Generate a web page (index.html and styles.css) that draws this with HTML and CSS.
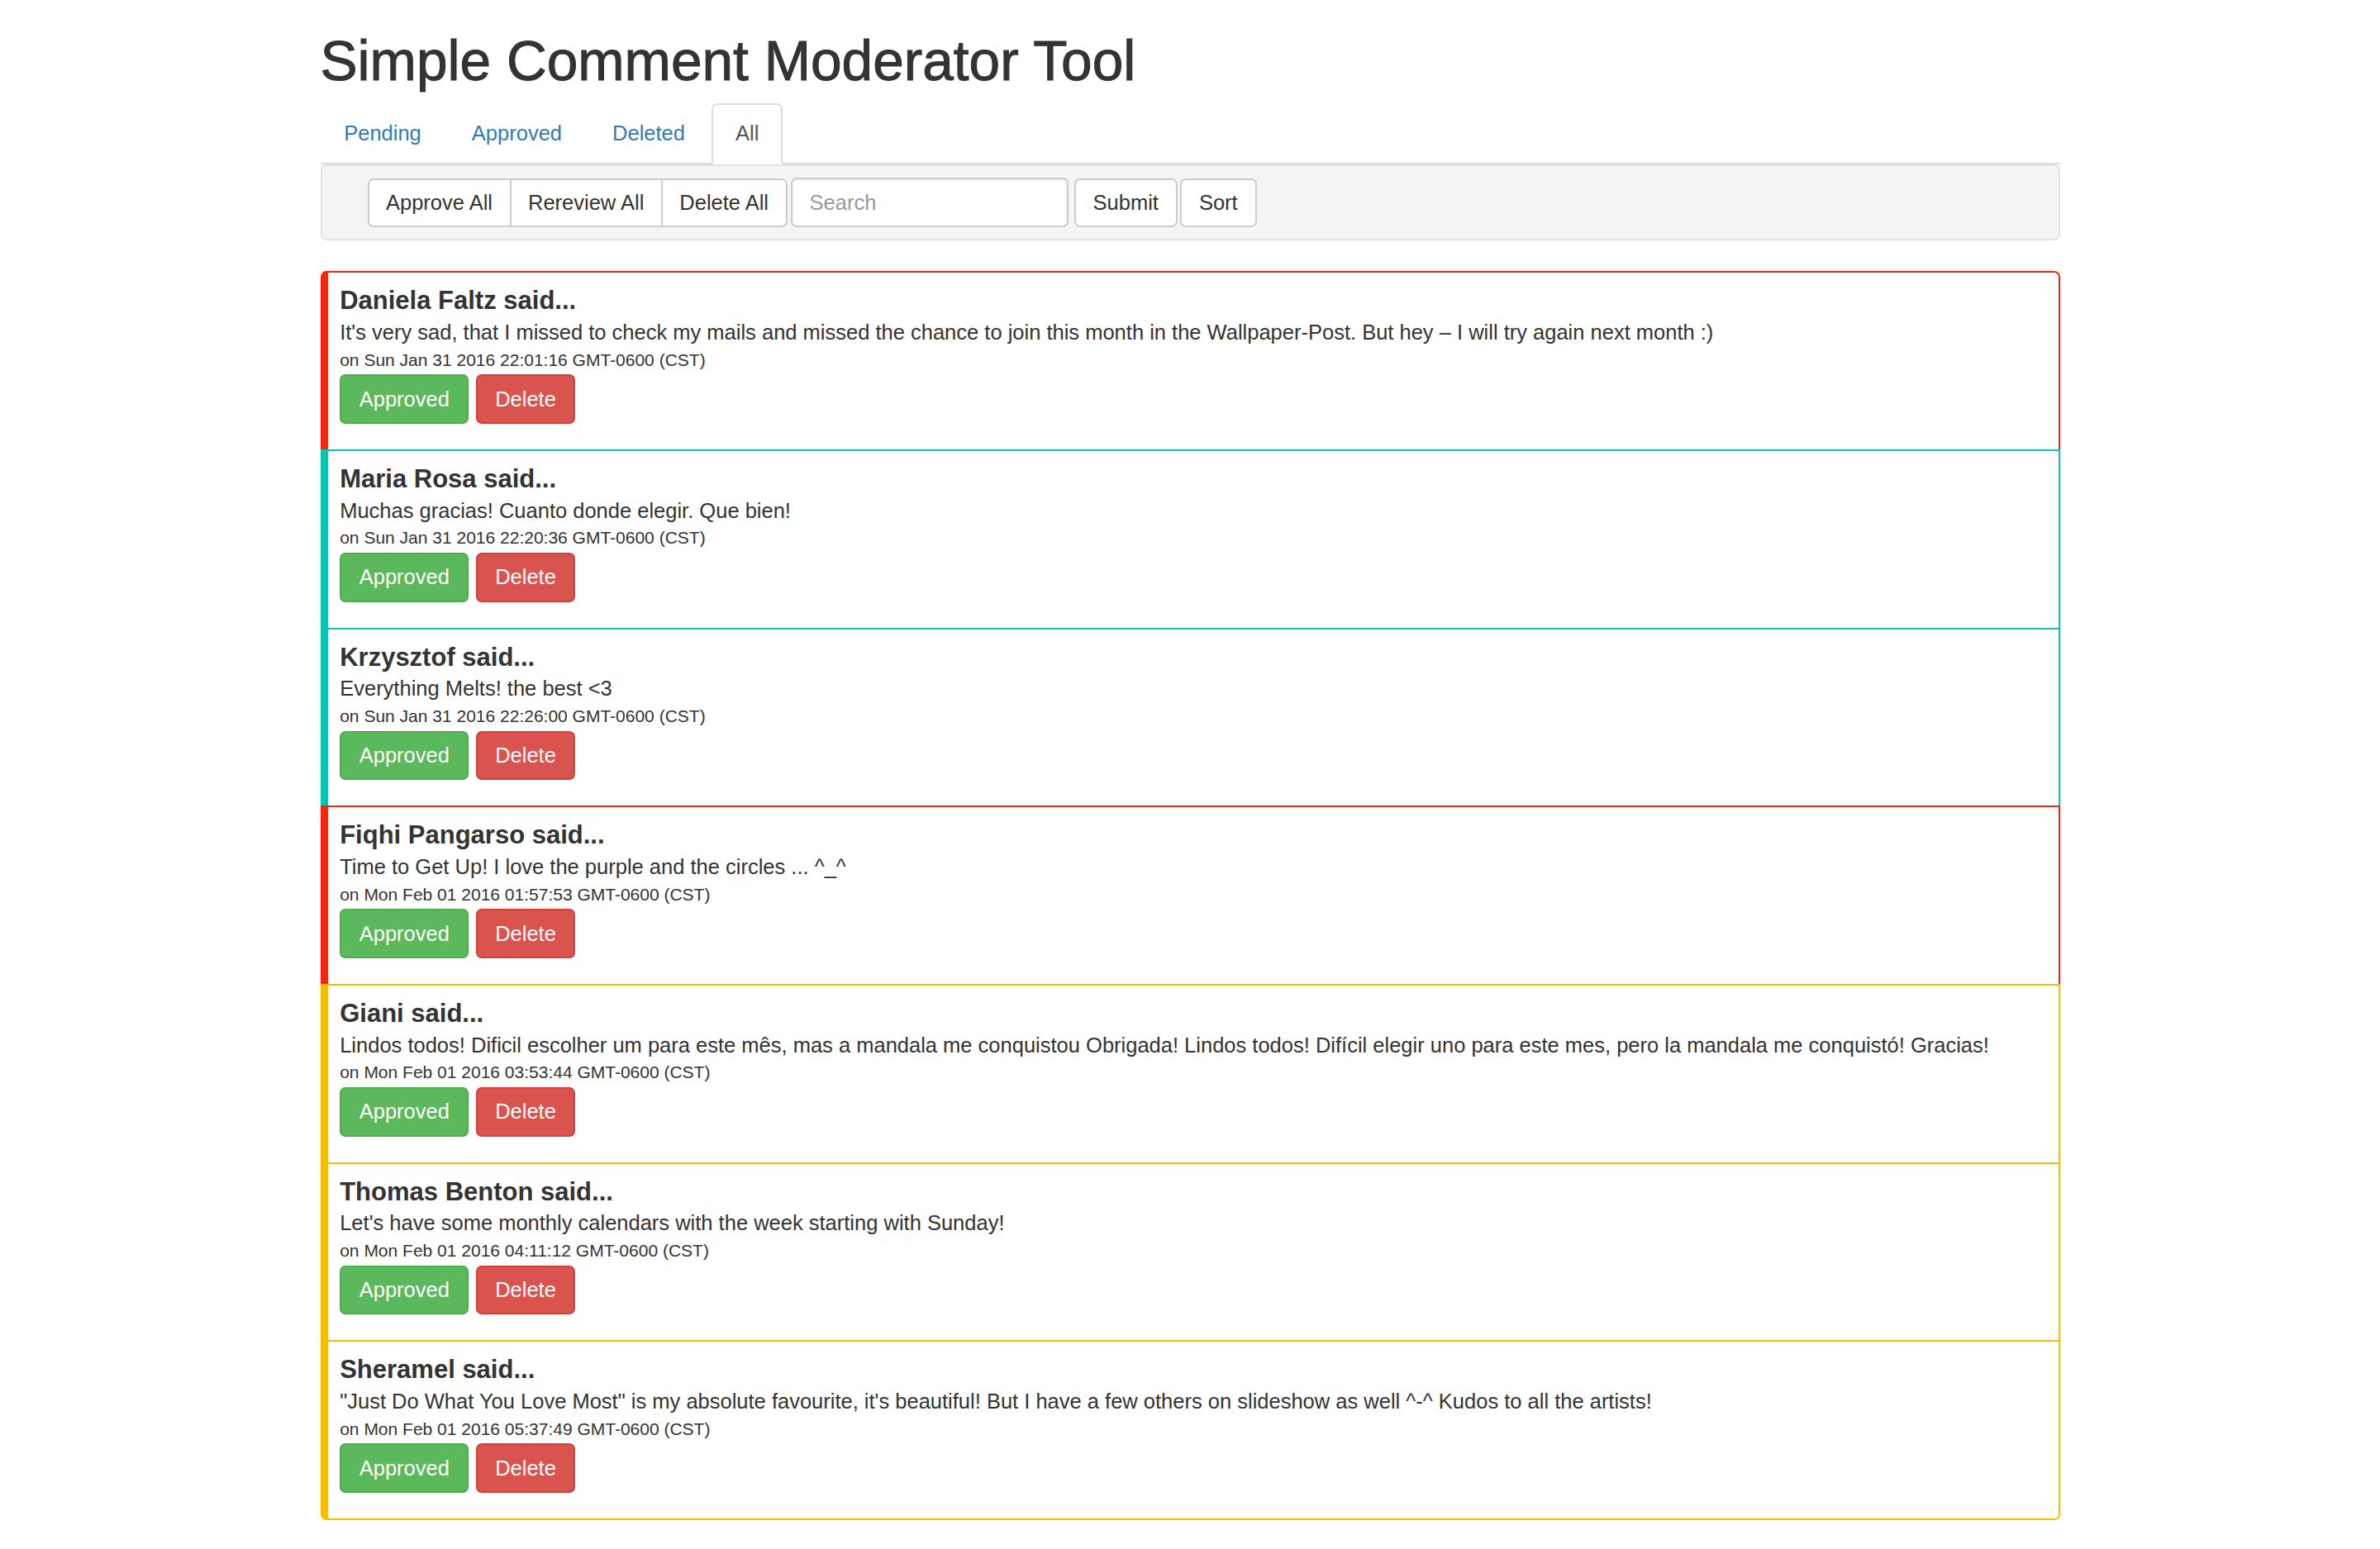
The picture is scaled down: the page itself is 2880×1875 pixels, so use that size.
FILE: index.html
```html
<!DOCTYPE html>
<html lang="en">
<head>
<meta charset="utf-8">
<title>Simple Comment Moderator Tool</title>
<link rel="stylesheet" href="styles.css">
</head>
<body>
<div class="container">
  <h1 class="title">Simple Comment Moderator Tool</h1>
  <ul class="tabs">
    <li class="tab"><a href="#">Pending</a></li>
    <li class="tab"><a href="#">Approved</a></li>
    <li class="tab"><a href="#">Deleted</a></li>
    <li class="tab tab-active"><a href="#">All</a></li>
  </ul>
  <div class="toolbar">
    <div class="btn-group">
      <button class="btn btn-default">Approve All</button>
      <button class="btn btn-default">Rereview All</button>
      <button class="btn btn-default">Delete All</button>
    </div>
    <input class="search" type="text" placeholder="Search">
    <button class="btn btn-default btn-submit">Submit</button>
    <button class="btn btn-default btn-sort">Sort</button>
  </div>
  <ul class="comments">
    <li class="comment comment-red">
      <h4 class="comment-author">Daniela Faltz said...</h4>
      <p class="comment-text">It's very sad, that I missed to check my mails and missed the chance to join this month in the Wallpaper-Post. But hey – I will try again next month :)</p>
      <small class="comment-date">on Sun Jan 31 2016 22:01:16 GMT-0600 (CST)</small>
      <div class="comment-actions"><button class="btn btn-approved">Approved</button><button class="btn btn-delete">Delete</button></div>
    </li>
    <li class="comment comment-teal">
      <h4 class="comment-author">Maria Rosa said...</h4>
      <p class="comment-text">Muchas gracias! Cuanto donde elegir. Que bien!</p>
      <small class="comment-date">on Sun Jan 31 2016 22:20:36 GMT-0600 (CST)</small>
      <div class="comment-actions"><button class="btn btn-approved">Approved</button><button class="btn btn-delete">Delete</button></div>
    </li>
    <li class="comment comment-teal">
      <h4 class="comment-author">Krzysztof said...</h4>
      <p class="comment-text">Everything Melts! the best &lt;3</p>
      <small class="comment-date">on Sun Jan 31 2016 22:26:00 GMT-0600 (CST)</small>
      <div class="comment-actions"><button class="btn btn-approved">Approved</button><button class="btn btn-delete">Delete</button></div>
    </li>
    <li class="comment comment-red">
      <h4 class="comment-author">Fiqhi Pangarso said...</h4>
      <p class="comment-text">Time to Get Up! I love the purple and the circles ... ^_^</p>
      <small class="comment-date">on Mon Feb 01 2016 01:57:53 GMT-0600 (CST)</small>
      <div class="comment-actions"><button class="btn btn-approved">Approved</button><button class="btn btn-delete">Delete</button></div>
    </li>
    <li class="comment comment-yellow">
      <h4 class="comment-author">Giani said...</h4>
      <p class="comment-text">Lindos todos! Dificil escolher um para este mês, mas a mandala me conquistou Obrigada! Lindos todos! Difícil elegir uno para este mes, pero la mandala me conquistó! Gracias!</p>
      <small class="comment-date">on Mon Feb 01 2016 03:53:44 GMT-0600 (CST)</small>
      <div class="comment-actions"><button class="btn btn-approved">Approved</button><button class="btn btn-delete">Delete</button></div>
    </li>
    <li class="comment comment-yellow">
      <h4 class="comment-author">Thomas Benton said...</h4>
      <p class="comment-text">Let's have some monthly calendars with the week starting with Sunday!</p>
      <small class="comment-date">on Mon Feb 01 2016 04:11:12 GMT-0600 (CST)</small>
      <div class="comment-actions"><button class="btn btn-approved">Approved</button><button class="btn btn-delete">Delete</button></div>
    </li>
    <li class="comment comment-yellow">
      <h4 class="comment-author">Sheramel said...</h4>
      <p class="comment-text">"Just Do What You Love Most" is my absolute favourite, it's beautiful! But I have a few others on slideshow as well ^-^ Kudos to all the artists!</p>
      <small class="comment-date">on Mon Feb 01 2016 05:37:49 GMT-0600 (CST)</small>
      <div class="comment-actions"><button class="btn btn-approved">Approved</button><button class="btn btn-delete">Delete</button></div>
    </li>
  </ul>
</div>
</body>
</html>
```

FILE: styles.css
```css
* {
  box-sizing: border-box;
}

body {
  margin: 0;
  background: #fff;
  color: #333;
  font-family: "Liberation Sans", Arial, sans-serif;
  font-size: 25.5px;
}

.container {
  width: 2105px;
  margin: 0 auto;
}

.title {
  margin: 37px 0 0;
  color: #333;
  font-size: 67.6px;
  font-weight: 400;
  line-height: 74px;
  -webkit-text-stroke: 1px #333;
}

/* tabs */
.tabs {
  display: flex;
  margin: 14px 0 0;
  padding: 0;
  list-style: none;
  border-bottom: 2px solid #ddd;
}

.tab {
  margin-right: 3.7px;
  margin-bottom: -2px;
}

.tab a {
  display: block;
  height: 73.7px;
  padding: 0 26.7px;
  border: 2px solid transparent;
  border-radius: 7px 7px 0 0;
  color: #337ab7;
  line-height: 69.7px;
  text-decoration: none;
}

.tab-active a {
  border-color: #ddd #ddd transparent;
  background: #fff;
  color: #555;
}

/* toolbar */
.toolbar {
  display: flex;
  align-items: center;
  height: 91.4px;
  margin-top: 0.6px;
  padding-left: 55px;
  padding-top: 1px;
  background: #f5f5f5;
  border: 2px solid #e3e3e3;
  border-radius: 7px;
}

.btn {
  height: 58.3px;
  padding: 0 21px;
  border: 2px solid #ccc;
  border-radius: 7px;
  background: #fff;
  color: #333;
  font-family: inherit;
  font-size: 25.5px;
  line-height: normal;
  cursor: pointer;
}

.btn-group {
  display: flex;
}

.btn-group .btn {
  padding: 0 20.5px;
  border-radius: 0;
}

.btn-group .btn + .btn {
  margin-left: -2px;
}

.btn-group .btn:first-child {
  border-radius: 7px 0 0 7px;
}

.btn-group .btn:last-child {
  border-radius: 0 7px 7px 0;
}

.search {
  width: 336px;
  height: 60px;
  margin-left: 4px;
  padding: 0 21px;
  border: 2px solid #ccc;
  border-radius: 7px;
  background: #fff;
  box-shadow: inset 0 2px 2px rgba(0, 0, 0, 0.075);
  color: #555;
  font-family: inherit;
  font-size: 25.5px;
}

.search::placeholder {
  color: #999;
}

.btn-submit {
  margin-left: 7px;
}

.btn-sort {
  margin-left: 3px;
}

/* comments */
.comments {
  margin: 37.6px 0 0;
  padding: 0;
  list-style: none;
}

.comment {
  padding: 16px 15px 31.1px 14.7px;
  border-style: solid;
  border-width: 2px 2px 0 9px;
  background: #fff;
}

.comment:first-child {
  border-radius: 7px 7px 0 0;
}

.comment:last-child {
  border-bottom-width: 2px;
  border-radius: 0 0 7px 7px;
}

.comment-red {
  border-color: #f3260f;
}

.comment-teal {
  border-color: #0cc4b4;
}

.comment-yellow {
  border-color: #f6bd00;
}

.comment-author {
  margin: 0 0 6.8px;
  font-size: 31px;
  font-weight: 700;
  line-height: 36px;
}

.comment-text {
  margin: 0;
  line-height: 26px;
}

.comment-date {
  display: block;
  margin-top: 8.6px;
  font-size: 21px;
  line-height: 24px;
}

.comment-actions {
  display: flex;
  gap: 8.3px;
  margin-top: 5.8px;
}

.comment-actions .btn {
  height: 59.4px;
  padding: 0 21.5px;
  color: #fff;
}

.btn-approved {
  background: #5cb85c;
  border-color: #4cae4c;
}

.btn-delete {
  background: #d9534f;
  border-color: #d43f3a;
}
```
